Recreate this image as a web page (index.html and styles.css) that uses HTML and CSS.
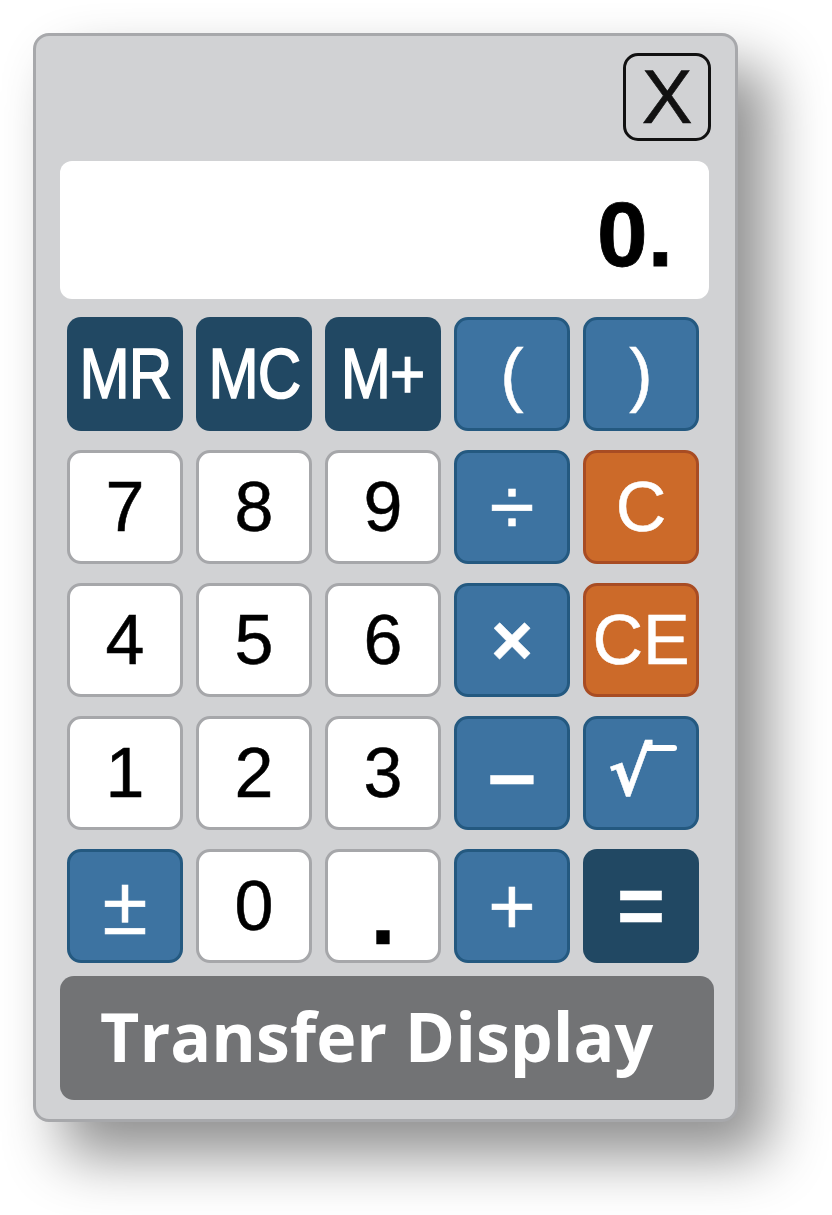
FILE: index.html
```html
<!DOCTYPE html>
<html>
<head>
<meta charset="utf-8">
<link rel="stylesheet" href="styles.css">
</head>
<body>
<div class="calc">
  <div class="topbar"><div class="close">X</div></div>
  <div class="display"><span class="value">0.</span></div>
  <div class="keys">
    <div class="key dark"><span class="narrow">MR</span></div>
    <div class="key dark"><span class="narrow">MC</span></div>
    <div class="key dark"><span class="narrow">M+</span></div>
    <div class="key blue">(</div>
    <div class="key blue">)</div>

    <div class="key white">7</div>
    <div class="key white">8</div>
    <div class="key white">9</div>
    <div class="key blue sym">÷</div>
    <div class="key orange">C</div>

    <div class="key white">4</div>
    <div class="key white">5</div>
    <div class="key white">6</div>
    <div class="key blue sym times">×</div>
    <div class="key orange">CE</div>

    <div class="key white">1</div>
    <div class="key white">2</div>
    <div class="key white">3</div>
    <div class="key blue sym minus">–</div>
    <div class="key blue sqrt"><span class="root">√</span></div>

    <div class="key blue sym">±</div>
    <div class="key white">0</div>
    <div class="key white dot">.</div>
    <div class="key blue sym">+</div>
    <div class="key dark sym eq">=</div>
  </div>
  <div class="transfer">Transfer Display</div>
</div>
</body>
</html>
```

FILE: styles.css
```css
html, body {
  margin: 0;
  padding: 0;
  background: #ffffff;
}

body {
  width: 832px;
  height: 1215px;
  overflow: hidden;
  font-family: "Liberation Sans", Arial, sans-serif;
}

.calc {
  box-sizing: border-box;
  margin: 33px 0 0 33px;
  width: 705px;
  height: 1089px;
  background: #d1d2d4;
  border: 3px solid #a7a8ab;
  border-radius: 16px;
  box-shadow: 30px 34px 58px rgba(0, 0, 0, 0.44);
  padding: 17px 24px 19px 24px;
  display: flex;
  flex-direction: column;
}

.topbar {
  display: flex;
  justify-content: flex-end;
}

.close {
  box-sizing: border-box;
  width: 88px;
  height: 88px;
  border: 3.5px solid #111111;
  border-radius: 15px;
  display: flex;
  align-items: center;
  justify-content: center;
  font-size: 76px;
  line-height: 1;
  color: #111111;
  -webkit-text-stroke: 0.6px #111111;
}

.display {
  margin-top: 20px;
  width: 649px;
  height: 138px;
  background: #ffffff;
  border-radius: 12px;
  display: flex;
  align-items: center;
  justify-content: flex-end;
  box-sizing: border-box;
  padding: 8px 36px 0 0;
}

.value {
  font-weight: bold;
  font-size: 91px;
  line-height: 1;
  color: #000;
  -webkit-text-stroke: 0.8px #000;
}

.keys {
  margin: 18px 0 0 7px;
  display: grid;
  grid-template-columns: repeat(5, 116px);
  grid-template-rows: repeat(5, 114px);
  column-gap: 13px;
  row-gap: 19px;
}

.key {
  box-sizing: border-box;
  border-radius: 14px;
  display: flex;
  align-items: center;
  justify-content: center;
  font-size: 70px;
  line-height: 1;
  color: #ffffff;
  -webkit-text-stroke: 0.5px currentColor;
}

.key.white {
  background: #ffffff;
  border: 3px solid #a6a7aa;
  color: #000000;
}

.key.blue {
  background: #3d73a1;
  border: 3px solid #245980;
}

.key.orange {
  background: #cc6a29;
  border: 3px solid #a84c23;
}

.key.dark {
  background: #214863;
}

.narrow {
  display: inline-block;
  transform: scaleX(0.86);
  letter-spacing: -1px;
  -webkit-text-stroke: 1.6px #ffffff;
}

.key.sym {
  font-size: 82px;
}

.key.times {
  font-size: 72px;
  font-weight: bold;
}

.key.minus {
  font-size: 86px;
  font-weight: bold;
}

.key.eq {
  font-weight: bold;
}

.key.sqrt {
  font-family: "DejaVu Sans", sans-serif;
  font-size: 66px;
  font-weight: bold;
}

.root {
  position: relative;
  display: inline-block;
  margin-right: 22px;
}

.root::after {
  content: "";
  position: absolute;
  right: -25px;
  top: 5px;
  width: 34px;
  height: 6px;
  border-radius: 3px;
  background: #ffffff;
}

.key.dot {
  font-size: 90px;
  font-weight: bold;
  padding-top: 14px;
}

.transfer {
  margin-top: 13px;
  width: 654px;
  height: 124px;
  box-sizing: border-box;
  background: #727375;
  border-radius: 14px;
  display: flex;
  align-items: center;
  padding: 0 0 4px 40px;
  font-family: "Open Sans", "Noto Sans", sans-serif;
  font-weight: bold;
  font-size: 68px;
  color: #ffffff;
  line-height: 1;
}
```
